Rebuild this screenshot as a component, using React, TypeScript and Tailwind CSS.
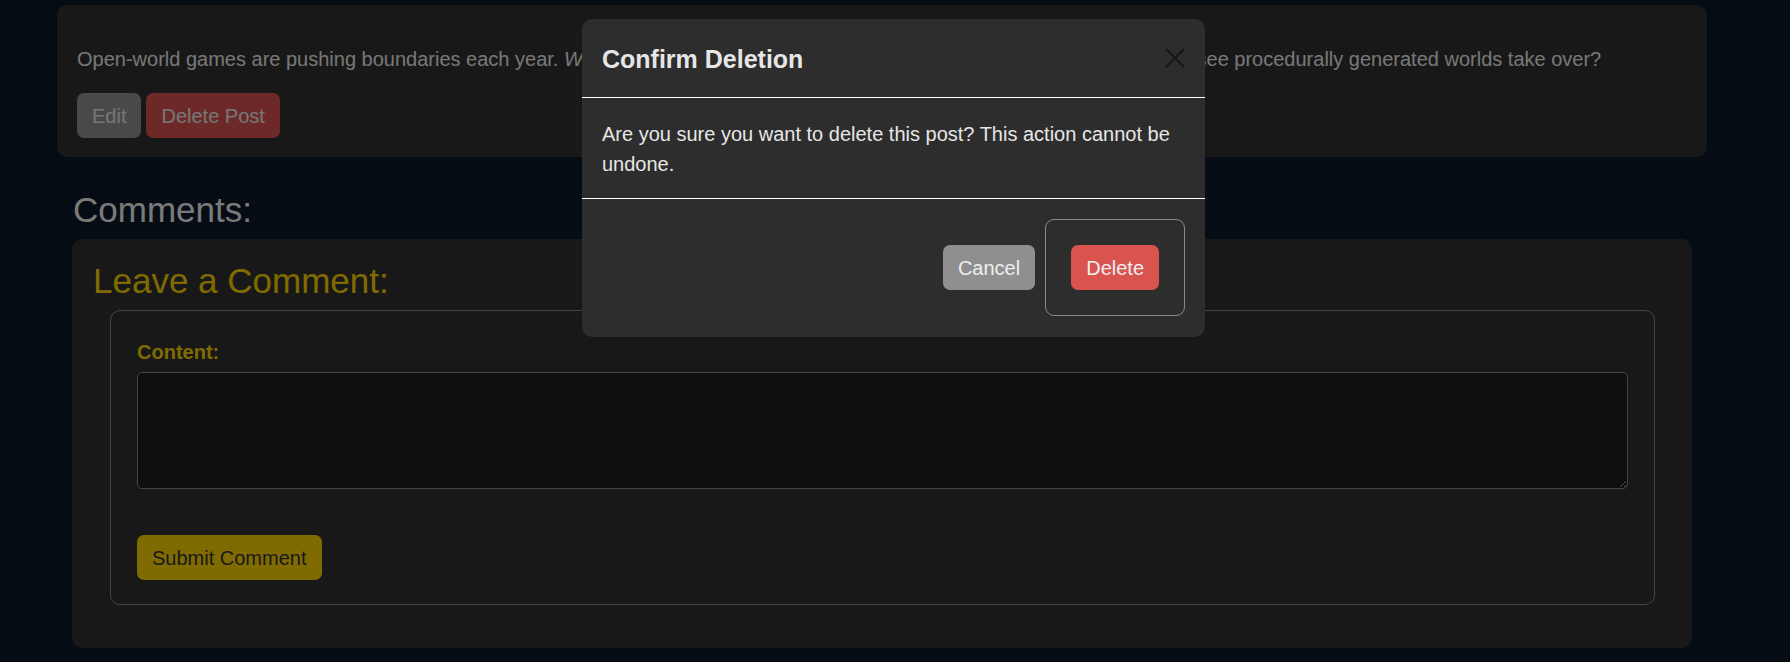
import React from 'react';

const App = () => {
  return (
    <div className="relative h-[662px] overflow-hidden bg-[#0a1826] font-['Liberation_Sans',Arial,sans-serif]">
      {/* Post card */}
      <div className="ml-[57px] mt-[5px] w-[1650px] rounded-[10px] bg-[#303030] pl-[20px] pr-5 pt-[39px] pb-[19px]">
        <p className="text-[20px] leading-[30px] text-[#eeeeee] whitespace-nowrap">
          Open-world games are pushing boundaries each year. <em>What does the future hold for the genre?</em> Will we someday finally get to see procedurally generated worlds take over?
        </p>
        <div className="mt-[19px] flex gap-[5px]">
          <button className="h-[45px] rounded-[7px] bg-[#939393] px-[15px] text-[20px] text-[#eeeeee]">Edit</button>
          <button className="h-[45px] rounded-[7px] bg-[#d9534f] px-[15px] text-[20px] text-[#eeeeee]">Delete Post</button>
        </div>
      </div>

      {/* Comments */}
      <h3 className="ml-[73px] mt-[32px] mb-[8px] text-[35px] leading-[42px] font-medium text-[#f4f4f4]">Comments:</h3>
      <div className="ml-[72px] w-[1620px] rounded-[10px] bg-[#303030] pt-[21px] pb-[43px]">
        <h3 className="ml-[21px] text-[35px] leading-[42px] font-medium text-[#ffd700]">Leave a Comment:</h3>
        <form className="ml-[38px] mt-[8px] w-[1545px] rounded-[10px] border border-[#888888] px-[26px] pt-[26px] pb-[24px]">
          <label className="block text-[20px] leading-[30px] font-bold text-[#ffd700]">Content:</label>
          <textarea className="mt-[5px] block h-[117px] w-full rounded-[5px] border border-[#888888] bg-[#1e1e1e]" />
          <button type="button" className="mt-[46px] h-[45px] rounded-[7px] bg-[#ffd700] px-[15px] text-[20px] text-[#333333]">Submit Comment</button>
        </form>
      </div>

      {/* Modal backdrop + dialog */}
      <div className="absolute inset-0 bg-black/50">
        <div className="ml-[582px] mt-[19px] w-[623px] rounded-[10px] bg-[#2d2d2d] text-[#e6e6e6]">
          <div className="flex items-start justify-between border-b border-white px-[20px] pt-[25px] pb-[23px]">
            <h5 className="text-[25px] leading-[30px] font-semibold">Confirm Deletion</h5>
            <button className="mt-[4px] h-[20px] w-[20px]" aria-label="Close">
              <svg viewBox="0 0 20 20" className="h-[20px] w-[20px]" fill="none" stroke="#161616" strokeWidth="2">
                <path d="M1 1L19 19M19 1L1 19" />
              </svg>
            </button>
          </div>
          <div className="border-b border-white px-[20px] pt-[21px] pb-[19px] text-[20px] leading-[30px]">
            Are you sure you want to delete this post? This action cannot be undone.
          </div>
          <div className="flex items-center justify-end gap-[10px] pr-[20px] pt-[20px] pb-[21px]">
            <button className="h-[45px] rounded-[7px] bg-[#8f8f8f] px-[15px] text-[20px] text-[#eeeeee]">Cancel</button>
            <div className="rounded-[9px] border border-[#8a8a8a] p-[25px]">
              <button className="block h-[45px] rounded-[7px] bg-[#d9534f] px-[15px] text-[20px] text-[#eeeeee]">Delete</button>
            </div>
          </div>
        </div>
      </div>
    </div>
  );
};

export default App;
